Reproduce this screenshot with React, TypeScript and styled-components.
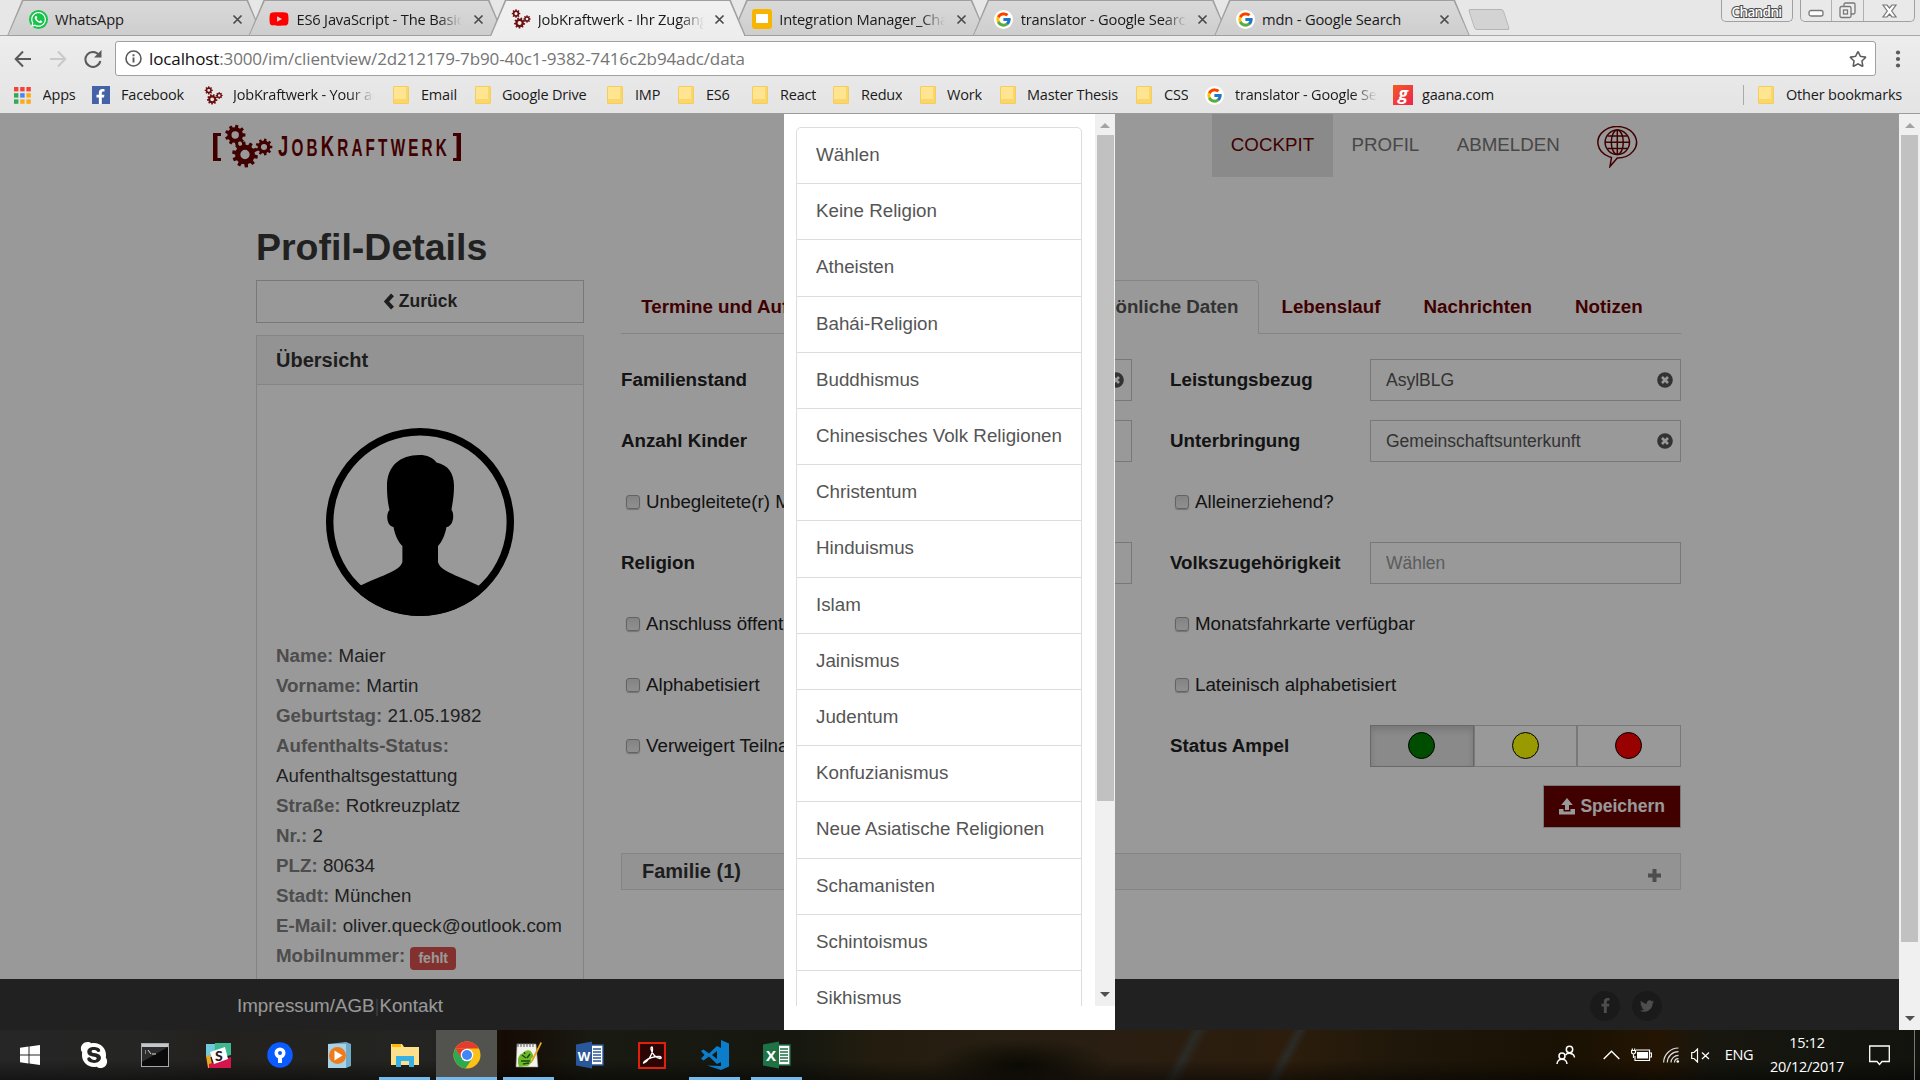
import React from 'react';
import styled, { createGlobalStyle, css } from 'styled-components';
import { FcGoogle } from 'react-icons/fc';
import { FaWhatsapp, FaFacebookF, FaTwitter, FaSkype, FaRegStar, FaYoutube } from 'react-icons/fa';

const UI = '"Open Sans", "Noto Sans", sans-serif';
const PAGE = '"Liberation Sans", Arial, sans-serif';
const MAROON = '#6c0000';

const Global = createGlobalStyle`
  * { box-sizing: border-box; }
  html, body { margin: 0; padding: 0; overflow: hidden; }
  body { width: 1920px; height: 1080px; background: #999; }
  svg { display: block; flex: none; }
`;

const Screen = styled.div`
  width: 1920px;
  height: 1080px;
  display: flex;
  flex-direction: column;
  overflow: hidden;
`;

/* ---------- browser chrome ---------- */

const Chrome = styled.header`
  height: 114px;
  flex: none;
  display: flex;
  flex-direction: column;
  background: linear-gradient(#e7e7e7 0, #e7e7e7 35px, #ededed 36px, #e4e4e4 113px);
  border-bottom: 1.5px solid #9b9b9b;
  font-family: ${UI};
  color: #1a1a1a;
`;

const TabStrip = styled.div`
  height: 36px;
  display: flex;
  align-items: flex-start;
  padding-left: 7px;
  box-shadow: inset 0 -1px 0 #a8a8a8;
`;

const SLANT = 'polygon(15px 0, calc(100% - 15px) 0, 100% 100%, 0 100%)';

const Tab = styled.div<{ $active?: boolean }>`
  position: relative;
  z-index: ${p => (p.$active ? 2 : 1)};
  width: 256px;
  height: 36px;
  margin-right: -14.6px;
  padding: 2px 16px 0 21px;
  display: flex;
  align-items: center;
  clip-path: ${SLANT};
  background: #9f9f9f;
  &::before {
    content: '';
    position: absolute;
    inset: 1px 1.4px ${p => (p.$active ? 0 : 1)}px 1.4px;
    clip-path: ${SLANT};
    background: ${p => (p.$active ? 'linear-gradient(#f1f1f1,#ededed)' : 'linear-gradient(#d9d9d9,#cecece)')};
  }
  > * { position: relative; }
`;

const TabIcon = styled.span`
  width: 20px;
  display: flex;
  justify-content: center;
  margin-right: 7px;
`;

const fade = css`
  mask-image: linear-gradient(90deg, #000 calc(100% - 24px), transparent);
`;

const TabTitle = styled.span<{ $fade?: boolean }>`
  flex: 1;
  overflow: hidden;
  white-space: nowrap;
  font-size: 14.7px;
  letter-spacing: -0.18px;
  line-height: 22px;
  ${p => p.$fade && fade}
`;

const TabClose = styled.span`
  width: 20px;
  margin-left: 6px;
  display: flex;
  justify-content: center;
`;

const NewTab = styled.div`
  width: 42px;
  height: 21px;
  margin: 9px 0 0 13px;
  background: #d3d3d3;
  border: 1px solid #b4b4b4;
  border-radius: 3px;
  transform: skewX(18deg) scaleX(0.84);
`;

const WindowControls = styled.div`
  margin-left: auto;
  display: flex;
  gap: 7.5px;
  padding-right: 5px;
`;

const ControlBox = styled.div`
  height: 22px;
  display: flex;
  border: 1.5px solid #a0a0a0;
  border-top: 0;
  border-radius: 0 0 5px 5px;
  background: #e9e9e9;
`;

const UserName = styled.span`
  width: 70px;
  text-align: center;
  font-size: 13.5px;
  font-weight: 600;
  line-height: 24px;
  letter-spacing: -0.6px;
  color: #fff;
  -webkit-text-stroke: 2px #4a4a4a;
  paint-order: stroke fill;
`;

const ControlCell = styled.span<{ $w: number }>`
  width: ${p => p.$w}px;
  display: flex;
  align-items: center;
  justify-content: center;
  & + & { border-left: 1px solid #b0b0b0; }
`;

const AddressRow = styled.div`
  height: 45px;
  display: flex;
  align-items: center;
  padding: 0 15px 0 13px;
`;

const NavButton = styled.span`
  width: 20px;
  margin-right: 15px;
  display: flex;
  justify-content: center;
`;

const UrlBox = styled.div`
  flex: 1;
  height: 35px;
  margin: 0 15px 0 -3px;
  padding: 0 8px 0 9px;
  display: flex;
  align-items: center;
  background: #fff;
  border: 1px solid #a0a0a0;
  border-radius: 3px;
`;

const Url = styled.span`
  flex: 1;
  margin-left: 7px;
  font-size: 17px;
  letter-spacing: -0.115px;
  white-space: nowrap;
  color: #757575;
  b { font-weight: 400; color: #111; }
`;

const BookmarkRow = styled.div`
  height: 28px;
  display: flex;
  align-items: center;
  padding-left: 14px;
`;

const Bookmark = styled.div<{ $w?: number; $gap: number }>`
  ${p => p.$w && `width: ${p.$w}px;`}
  flex: none;
  display: flex;
  align-items: center;
  gap: ${p => p.$gap}px;
  font-size: 14.5px;
  letter-spacing: -0.2px;
  white-space: nowrap;
`;

const BookmarkText = styled.span<{ $w?: number }>`
  overflow: hidden;
  line-height: 24px;
  ${p => p.$w && css`width: ${p.$w}px; ${fade}`}
`;

const BookmarkDivider = styled.span`
  width: 1px;
  height: 20px;
  margin: 0 14px 0 auto;
  background: #aaa;
`;

const Folder = styled.span`
  width: 16px;
  height: 18px;
  background: #ffe591;
  border: 1px solid #f3cd62;
  border-radius: 1px;
  box-shadow: inset -3px -5px 0 -1px #fbd768;
`;

const Gaana = styled.span`
  width: 20px;
  height: 20px;
  background: linear-gradient(135deg, #f15a22, #ee2350);
  color: #fff;
  font: italic 700 18px/17px "Open Sans", sans-serif;
  text-align: center;
`;

const FacebookMark = styled.span`
  width: 18px;
  height: 18px;
  background: #4561a8;
  color: #fff;
  display: flex;
  align-items: flex-end;
  justify-content: flex-end;
  padding-right: 2px;
`;

const SlidesMark = styled.span`
  width: 20px;
  height: 20px;
  border-radius: 3px;
  background: #fff;
  border: solid #f8b500;
  border-width: 5px 4px 6px;
`;

const Round = styled.span<{ $bg?: string }>`
  width: 19px;
  height: 19px;
  border-radius: 50%;
  background: ${p => p.$bg ?? '#fff'};
  display: flex;
  align-items: center;
  justify-content: center;
`;

/* ---------- page ---------- */

const Viewport = styled.div`
  position: relative;
  flex: 1;
  min-height: 0;
  display: flex;
`;

const Page = styled.div`
  position: relative;
  width: 1899px;
  display: flex;
  flex-direction: column;
  background: #fff;
  font-family: ${PAGE};
  font-size: 18.75px;
  color: #222;
`;

const Main = styled.main`
  flex: 1;
  min-height: 0;
  overflow: hidden;
`;

const SiteHeader = styled.div`
  height: 63px;
  display: flex;
  justify-content: space-between;
  padding: 0 260px 0 213px;
`;

const Nav = styled.nav`
  display: flex;
`;

const NavItem = styled.a<{ $active?: boolean }>`
  padding: 0 18.7px;
  height: 63px;
  line-height: 61px;
  color: ${p => (p.$active ? MAROON : '#777')};
  background: ${p => (p.$active ? '#e7e7e7' : 'transparent')};
`;

const LanguageIcon = styled.span`
  margin: 12px 0 0 18.5px;
`;

const LogoWrap = styled.div`
  padding-top: 9px;
`;

const Content = styled.div`
  padding: 49px 0 0 256px;
  width: 1681px;
`;

const Title = styled.h1`
  margin: 0 0 11px;
  font-size: 37.5px;
  line-height: 43px;
  font-weight: 700;
  color: #373737;
`;

const Columns = styled.div`
  display: grid;
  grid-template-columns: 328px 1060px;
  column-gap: 37px;
`;

const Button = styled.button<{ $primary?: boolean }>`
  height: 43px;
  padding: 0 15px 0 ${p => (p.$primary ? 14 : 15)}px;
  display: flex;
  align-items: center;
  justify-content: center;
  gap: 4px;
  font: 700 17.5px ${PAGE};
  border: 1px solid #c8c8c8;
  color: ${p => (p.$primary ? '#fff' : '#333')};
  background: ${p => (p.$primary ? MAROON : '#fff')};
`;

const BackButton = styled(Button)`
  width: 328px;
  margin-bottom: 12px;
`;

const Panel = styled.section`
  border: 1px solid #ddd;
  height: 900px;
`;

const PanelHead = styled.div`
  height: 49px;
  padding: 0 19px;
  line-height: 48px;
  font-size: 20px;
  font-weight: 700;
  color: #333;
  background: #f5f5f5;
  border-bottom: 1px solid #ddd;
`;

const PanelBody = styled.div`
  padding: 43px 19px 0;
`;

const AvatarWrap = styled.div`
  display: flex;
  justify-content: center;
  margin-bottom: 25px;
`;

const Detail = styled.div`
  line-height: 30px;
  white-space: nowrap;
  color: #373737;
  b { color: #808080; }
`;

const Badge = styled.span`
  display: inline-block;
  height: 23px;
  padding: 0 8px;
  line-height: 23px;
  vertical-align: -1px;
  margin: -4px 0;
  font-size: 14.06px;
  font-weight: 700;
  color: #fff;
  background: #d9534f;
  border-radius: 4px;
`;

const PageTabs = styled.div`
  height: 54px;
  display: flex;
  align-items: stretch;
  border-bottom: 1px solid #ddd;
  font-weight: 700;
`;

const PageTab = styled.a<{ $active?: boolean }>`
  margin: 0 2.5px -1px 0;
  padding: 0 19.3px;
  line-height: 52px;
  border: 1px solid transparent;
  white-space: nowrap;
  color: ${MAROON};
  ${p =>
    p.$active &&
    css`
      color: #555;
      background: #fff;
      border-color: #ddd #ddd #fff;
      border-radius: 5px 5px 0 0;
    `}
`;

const TabGroup = styled.div<{ $w: number }>`
  display: flex;
  width: ${p => p.$w}px;
  justify-content: flex-end;
`;

const Form = styled.div`
  margin-top: 15.5px;
  display: grid;
  grid-template-columns: 201px 310px 38px 200px 311px;
  grid-auto-rows: 61px;
  align-items: center;
  color: #222;
`;

const Label = styled.label<{ $right?: boolean }>`
  grid-column: ${p => (p.$right ? 4 : 1)};
  font-weight: 700;
`;

const Input = styled.div<{ $right?: boolean; $empty?: boolean }>`
  grid-column: ${p => (p.$right ? 5 : 2)};
  height: 42px;
  padding: 0 7px 0 15px;
  display: flex;
  align-items: center;
  justify-content: space-between;
  border: 1px solid #c8c8c8;
  font-size: 17.5px;
  color: ${p => (p.$empty ? '#999' : '#555')};
`;

const CheckLabel = styled.label<{ $right?: boolean }>`
  grid-column: ${p => (p.$right ? '4 / span 2' : '1 / span 2')};
  display: flex;
  align-items: center;
  gap: 6px;
  padding-left: 5px;
  white-space: nowrap;
`;

const Check = styled.span`
  width: 14px;
  height: 14px;
  border: 1px solid #a6a6a6;
  border-radius: 3px;
  background: linear-gradient(#dcdcdc, #efefef);
  box-shadow: 0 1px 1px rgba(0, 0, 0, 0.25);
`;

const Lights = styled.div`
  grid-column: 5;
  height: 42px;
  display: grid;
  grid-template-columns: 104px 103px 104px;
`;

const Light = styled.span<{ $c: string; $on?: boolean }>`
  display: flex;
  align-items: center;
  justify-content: center;
  padding: 0 1px 1px 0;
  border: 1px solid ${p => (p.$on ? '#adadad' : '#c8c8c8')};
  background: ${p => (p.$on ? '#e6e6e6' : '#fff')};
  box-shadow: ${p => (p.$on ? 'inset 0 4px 6px rgba(0,0,0,0.14)' : 'none')};
  &::before {
    content: '';
    width: 25px;
    height: 25px;
    border: 1px solid #000;
    border-radius: 50%;
    background: ${p => p.$c};
  }
`;

const Actions = styled.div`
  display: flex;
  justify-content: flex-end;
  margin: 8.5px 0 25px;
`;

const Accordion = styled.div`
  height: 37px;
  padding: 0 19px 1px 20px;
  display: flex;
  align-items: center;
  justify-content: space-between;
  border: 1px solid #ddd;
  background: #f5f5f5;
  font-size: 20px;
  font-weight: 700;
  color: #333;
  svg { margin-top: 9px; }
`;

const Footer = styled.footer`
  flex: none;
  height: 51px;
  padding: 2px 237px 0 237px;
  display: flex;
  align-items: center;
  justify-content: space-between;
  background: #383838;
  color: #666;
  a { color: #fff; }
`;

const Social = styled.div`
  display: flex;
  gap: 12px;
`;

const SocialButton = styled.span`
  width: 30px;
  height: 30px;
  border-radius: 50%;
  background: #2c2c2c;
  color: #808080;
  display: flex;
  align-items: center;
  justify-content: center;
`;

const Backdrop = styled.div`
  position: absolute;
  inset: 0;
  background: rgba(0, 0, 0, 0.4);
`;

const Modal = styled.div`
  position: absolute;
  top: 0;
  bottom: 0;
  left: 784px;
  width: 331px;
  padding-bottom: 24px;
  display: flex;
  background: #fff;
`;

const ListScroll = styled.div`
  flex: 1;
  overflow: hidden;
  padding: 13px 13px 0 12px;
`;

const List = styled.ul`
  margin: 0;
  padding: 0;
  list-style: none;
  border: 1px solid #ddd;
  border-radius: 5px;
`;

const ListItem = styled.li`
  height: 56.2px;
  padding: 0 19px;
  line-height: 54px;
  color: #555;
  white-space: nowrap;
  &:first-child { height: 55.3px; }
  & + & { border-top: 1px solid #ddd; }
`;

const ScrollTrack = styled.div<{ $w: number }>`
  width: ${p => p.$w}px;
  flex: none;
  background: #f0f0f0;
  display: flex;
  flex-direction: column;
  align-items: center;
`;

const ScrollThumb = styled.div<{ $h: number }>`
  width: 17px;
  height: ${p => p.$h}px;
  background: #c1c1c1;
`;

const ScrollArrow = styled.div<{ $down?: boolean }>`
  height: ${p => (p.$down ? 23 : 21)}px;
  display: flex;
  align-items: center;
  margin-top: ${p => (p.$down ? 'auto' : 0)};
  &::before {
    content: '';
    border: 5px solid transparent;
    ${p =>
      p.$down
        ? 'border-top-color: #505050; border-bottom: 0;'
        : 'border-bottom-color: #a3a3a3; border-top: 0; margin-top: 2px;'}
  }
`;

/* ---------- taskbar ---------- */

const Taskbar = styled.div`
  height: 50px;
  flex: none;
  display: flex;
  background:
    linear-gradient(rgba(0, 0, 0, 0) 60%, rgba(0, 0, 0, 0.45)),
    radial-gradient(ellipse 90px 26px at 1020px 34px, rgba(8, 8, 3, 0.9), transparent),
    linear-gradient(118deg, transparent 1050px, #2b2b27 1058px, transparent 1068px),
    linear-gradient(118deg, transparent 1140px, #2b2b27 1148px, transparent 1156px),
    linear-gradient(90deg, #262626 0, #252524 140px, #22211d 220px, #242422 430px, #150b04 505px, #191a12 590px,
      #161810 800px, #241d0f 880px, #271f12 1000px, #2a1e11 1160px, #2c1d0c 1290px, #1f170a 1400px, #191103 1560px,
      #241503 1660px, #171710 1710px, #12130d 1920px);
  color: #fff;
  font-family: ${UI};
`;

const TaskItem = styled.div<{ $w: number; $open?: boolean; $active?: boolean }>`
  width: ${p => p.$w}px;
  display: flex;
  align-items: center;
  justify-content: center;
  ${p => p.$active && 'background: #52524e;'}
  ${p => p.$open && 'border-bottom: 3px solid #76b9ed; padding-top: 3px;'}
`;

const TaskGap = styled.span<{ $w: number }>`
  width: ${p => p.$w}px;
`;

const Tray = styled.div`
  margin-left: auto;
  display: flex;
  align-items: center;
  padding-right: 5px;
`;

const TrayCell = styled.span<{ $w: number }>`
  width: ${p => p.$w}px;
  display: flex;
  justify-content: center;
`;

const TrayText = styled.span<{ $w: number }>`
  width: ${p => p.$w}px;
  text-align: center;
  font-size: 14.5px;
  line-height: 24px;
  letter-spacing: -0.3px;
  white-space: nowrap;
`;

const ShowDesktop = styled.span`
  width: 1px;
  height: 50px;
  background: #777;
`;

/* ---------- drawings ---------- */

function gear(cx: number, cy: number, r: number, n: number, phase = 0) {
  const pts: string[] = [];
  const inner = r * 0.76;
  const step = (Math.PI * 2) / n;
  for (let i = 0; i < n; i++) {
    const a = i * step + phase;
    for (const [k, rad] of [[-0.3, inner], [-0.2, r], [0.2, r], [0.3, inner]] as const) {
      pts.push(`${(cx + Math.cos(a + k * step) * rad).toFixed(2)},${(cy + Math.sin(a + k * step) * rad).toFixed(2)}`);
    }
  }
  const h = r * 0.36;
  return `M${pts.join('L')}Z M${cx - h},${cy}a${h},${h} 0 1,0 ${h * 2},0a${h},${h} 0 1,0 ${-h * 2},0Z`;
}

const Gears = ({ size = 20, color = '#6b1010' }) => (
  <svg width={size} height={size} viewBox="0 0 20 20" fill={color} fillRule="evenodd">
    <path d={gear(5, 4.6, 4.3, 8)} />
    <path d={gear(8.6, 14, 5.6, 9, 0.2)} />
    <path d={gear(16, 10, 3.7, 8)} />
  </svg>
);

const Logo = () => (
  <svg width="250" height="52" viewBox="213 123 250 52" fill={MAROON}>
    <path d="M213 133h8v3h-3.500v22H221v3h-8z M461 133h-8v3h3.500v22H453v3h8z" />
    <g fillRule="evenodd">
      <path d={gear(235.2, 135, 10.3, 9)} />
      <path d={gear(245, 154.5, 13, 10, 0.2)} />
      <path d={gear(264, 147, 8.4, 9)} />
    </g>
    <text x="278" y="156" fontFamily='"Liberation Sans", Arial, sans-serif' fontWeight="700" fontSize="24"
      letterSpacing="5" textLength="172" lengthAdjust="spacingAndGlyphs">
      <tspan fontSize="29">J</tspan>OB<tspan fontSize="29">K</tspan>RAFTWERK
    </text>
  </svg>
);

const Cross = () => (
  <svg width="11" height="11" viewBox="0 0 11 11" stroke="#4a4a4a" strokeWidth="1.700">
    <path d="M1.500 1.500l8 8M9.500 1.500l-8 8" />
  </svg>
);

const Arrow = ({ flip = false, color = '#5a5a5a' }) => (
  <svg width="18" height="18" viewBox="0 0 18 18" fill="none" stroke={color} strokeWidth="2"
    transform={flip ? 'scale(-1,1)' : undefined}>
    <path d="M17 9H2M9 1.500L1.700 9 9 16.500" />
  </svg>
);

const Globe = () => (
  <svg width="42" height="42" viewBox="0 0 42 42" fill="none" stroke={MAROON} strokeWidth="1.500">
    <path d="M12 30.600A19.300 15.800 0 1 1 20.300 32.100L13 40.500 14.500 31.500 12 30.600" />
    <circle cx="20.300" cy="16.300" r="12.200" />
    <ellipse cx="20.300" cy="16.300" rx="6" ry="12.200" />
    <path d="M20.300 4v24.500M8.100 16.300h24.400M10.500 10h19.600M10.500 22.600h19.600" />
  </svg>
);

const Avatar = () => (
  <svg width="188" height="188" viewBox="0 0 188 188">
    <clipPath id="avatarDisc"><circle cx="94" cy="94" r="93.900" /></clipPath>
    <circle cx="94" cy="94" r="90.300" fill="none" stroke="#000" strokeWidth="7.400" />
    <path clipPath="url(#avatarDisc)" d="M93.500 27C101 27 107 29.500 110.500 34.500C122 37 128 45 128 58C128 68 126.500 75 125.500 82C128.500 85 128 98 120.500 99C119 107 116 114 112 118V134C114 143 128 146 152.500 157.500V188H34.600V157.500C59 146 74 143 76.400 134V118C72 114 69 107 67.500 99C60 98 60 85 63.500 82C62 75 61 68 61 58C61 38 74 27 93.500 27Z" />
  </svg>
);

const ChevronLeft = () => (
  <svg width="12" height="17" viewBox="0 0 12 17" fill="none" stroke="#333" strokeWidth="4">
    <path d="M9.500 1.800L3.500 8.500l6 6.700" />
  </svg>
);

const Clear = () => (
  <svg width="16" height="16" viewBox="0 0 16 16">
    <circle cx="8" cy="8" r="7.800" fill="#555" />
    <path d="M5 5l6 6M11 5l-6 6" stroke="#fff" strokeWidth="2.600" />
  </svg>
);

const Upload = () => (
  <svg width="18" height="18" viewBox="0 0 18 18" fill="#fff">
    <path d="M9 0l5.800 7H11v5H7V7H3.200zM1 11h4.500v2.500h7V11H17v5.500H1z" />
  </svg>
);

const Plus = () => (
  <svg width="13" height="13" viewBox="0 0 13 13" fill="#808080">
    <path d="M4.500 0h4v4.500H13v4H8.500V13h-4V8.500H0v-4h4.500z" />
  </svg>
);

const AppsGrid = () => {
  const c = ['#f44336', '#f44336', '#f44336', '#34a853', '#4285f4', '#fbab17', '#34a853', '#fbab17', '#fbab17'];
  return (
    <svg width="17" height="17" viewBox="0 0 17 17">
      {c.map((f, i) => (
        <rect key={i} x={(i % 3) * 6.2} y={Math.floor(i / 3) * 6.2} width="4.400" height="4.400" fill={f} />
      ))}
    </svg>
  );
};

const WindowsLogo = () => (
  <svg width="20" height="20" viewBox="0 0 20 20" fill="#fff">
    <path d="M0 2.800l8.500-1.200v8H0zM9.500 1.500L20 0v9.600H9.500zM0 10.500h8.500v8L0 17.300zM9.500 10.500H20V20L9.500 18.500z" />
  </svg>
);

const Terminal = () => (
  <svg width="28" height="24" viewBox="0 0 28 24">
    <rect x=".5" y=".5" width="27" height="23" fill="#0a0a0a" stroke="#a5a9ad" />
    <rect x="1" y="1" width="26" height="3" fill="#c4c8cc" />
    <path d="M1 4h26L1 19z" fill="#444" opacity=".6" />
    <path d="M4 8h1M4 10h1M7 7l3 4M11 11h4" stroke="#ddd" />
  </svg>
);

const Slack = () => (
  <svg width="25" height="25" viewBox="0 0 25 25">
    <path d="M0 1h12l-3 13H0z" fill="#6ecadc" />
    <path d="M9 0h16v12L8 16z" fill="#3eb891" />
    <path d="M0 13l4-1 3 13H2z" fill="#e9a820" />
    <path d="M3 21l22-7v11H3z" fill="#d5164c" />
    <path d="M4 9l15-5 3 12-14 5z" fill="#fff" />
    <text x="12.800" y="18" textAnchor="middle" fontFamily="Lato, sans-serif" fontWeight="900" fontSize="14" fill="#222">S</text>
  </svg>
);

const SourceTree = () => (
  <svg width="26" height="26" viewBox="0 0 26 26">
    <circle cx="13" cy="13" r="12.800" fill="#0a5cff" />
    <circle cx="13" cy="11" r="5.500" fill="#fff" />
    <path d="M11 15h4v6h-4z" fill="#fff" />
    <circle cx="13" cy="11" r="2" fill="#0a5cff" />
  </svg>
);

const MediaPlayer = () => (
  <svg width="26" height="26" viewBox="0 0 26 26">
    <path d="M1 2l18-2 5 2v22l-5 2H1z" fill="#6faac8" />
    <path d="M1 2h18v24H1z" fill="#a8d3e6" />
    <circle cx="10.500" cy="13.500" r="8.500" fill="#ee7b1c" />
    <path d="M7.500 8.500l8 5-8 5z" fill="#fff" />
  </svg>
);

const Explorer = () => (
  <svg width="28" height="25" viewBox="0 0 28 25">
    <path d="M0 1h11l2 3h15v18H0z" fill="#ffe08a" />
    <path d="M1 1h9v3H1z" fill="#ffb900" />
    <path d="M5 24V13h18v11h-5v-6h-8v6z" fill="#35b1e8" />
  </svg>
);

const ChromeLogo = () => (
  <svg width="28" height="28" viewBox="0 0 28 28">
    <circle cx="14" cy="14" r="13.500" fill="#fbc116" />
    <path d="M2.300 7.300A13.500 13.500 0 0 1 25.800 7.500H14z" fill="#e33b2e" />
    <path d="M2.300 7.300A13.500 13.500 0 0 0 12.500 27.400L19.500 17 14 14 8 16z" fill="#2da94f" />
    <path d="M2.300 7.300L8.500 17.300 14 7.500H8z" fill="#e33b2e" />
    <circle cx="14" cy="14" r="6.300" fill="#fff" />
    <circle cx="14" cy="14" r="5" fill="#4285f4" />
  </svg>
);

const Notepad = () => (
  <svg width="28" height="28" viewBox="0 0 28 28">
    <path d="M2 3h19l2 23H1z" fill="#f4f4ee" stroke="#888" strokeWidth=".6" />
    <path d="M3 2v4M6 2v4M9 2v4M12 2v4M15 2v4M18 2v4" stroke="#555" />
    <path d="M3 18c1-4 3-6 6-6 1-3 6-4 8 0 2 3 1 5-1 6l1 3-4 4-9 1-1-4z" fill="#6fb92a" />
    <path d="M7 14l4 3M15 13l-3 4M6 20h9M8 23l6-1M9 11l1 2" stroke="#1c4a0c" strokeWidth="1.500" />
    <path d="M25.500 1L27 2 18 20l-2 2 .3-3z" fill="#e6a41c" />
  </svg>
);

const Office = ({ letter, color }: { letter: string; color: string }) => (
  <svg width="28" height="28" viewBox="0 0 28 28">
    <path d="M15 4h12v20H15z" fill="#fff" stroke={color} strokeWidth="1.400" />
    <path d="M17 8h8M17 11h8M17 14h8M17 17h8M17 20h8" stroke={color} strokeWidth="1.400" />
    <path d="M0 3.500L16 .5v27L0 24.500z" fill={color} />
    <text x="8" y="19.500" textAnchor="middle" fontFamily="Open Sans, sans-serif" fontWeight="700" fontSize={letter === 'W' ? 13 : 15} fill="#fff">{letter}</text>
  </svg>
);

const Acrobat = () => (
  <svg width="28" height="27" viewBox="0 0 28 27">
    <rect x="1" y="1" width="26" height="25" fill="#2a0503" stroke="#e0200c" strokeWidth="2" />
    <path d="M6 21c3-1 9-8 8.500-15-.2-2-2-1-1.500 1 1 5 5 9 9 9.500 2 0 1.500-2-1-2-5 0-10 1.500-14 4.500-1.500 1.500-2 2.500-1 2z" fill="none" stroke="#fff" strokeWidth="1.300" />
  </svg>
);

const VsCode = () => (
  <svg width="30" height="30" viewBox="0 0 30 30" fill="#0b7dcb">
    <path fillRule="evenodd" d="M21 0l8 3.500v23L21 30 7 25.500l14 .500zM1 11l2.500-1.500L9 13.500 17 6l4 2v14l-4 2-8-7.500-5.500 4L1 18.500 4.500 15zM17 11l-5 4 5 4z" />
  </svg>
);

const People = () => (
  <svg width="20" height="20" viewBox="0 0 20 20" fill="none" stroke="#fff" strokeWidth="1.500">
    <circle cx="13.500" cy="4.500" r="3.200" /><path d="M9.500 10c2-2.500 8.500-2.500 9 2.500" />
    <circle cx="6" cy="11" r="3" /><path d="M1 19c.5-6.500 9.500-6.500 10 0" />
  </svg>
);
const ChevronUp = () => (
  <svg width="17" height="10" viewBox="0 0 17 10" fill="none" stroke="#fff" strokeWidth="1.400"><path d="M.7 9L8.500 1.300 16.300 9" /></svg>
);
const Battery = () => (
  <svg width="21" height="14" viewBox="0 0 21 14" fill="none" stroke="#fff" strokeWidth="1.200">
    <path d="M5 2h13.500v10.500H4V8" /><path d="M6 4h11v6.500H6z" fill="#fff" stroke="none" />
    <path d="M19 5h1.500v4H19M.5 2.500h4v2.300l-2 1.500-2-1.500zM1.300.500v2M3.700.500v2M2.500 6v4" />
  </svg>
);
const Wifi = () => (
  <svg width="17" height="16" viewBox="0 0 17 16" fill="none" stroke="#ddd" strokeWidth="1.200">
    <path d="M.6 15.500A15 15 0 0 1 15.500 1M4.300 15.500A11 11 0 0 1 15.500 4.700M8 15.500A7.500 7.500 0 0 1 15.500 8.300M11.500 15.500A4 4 0 0 1 15.500 11.700" />
    <circle cx="14.800" cy="14.500" r="1.300" fill="#fff" stroke="none" />
  </svg>
);
const Muted = () => (
  <svg width="19" height="15" viewBox="0 0 19 15" fill="none" stroke="#fff" strokeWidth="1.200">
    <path d="M.7 4.500H3L6.500 1v13L3 10.500H.7zM11 4.500l7 6.500M18 4.500l-7 6.500" />
  </svg>
);
const ActionCenter = () => (
  <svg width="21" height="21" viewBox="0 0 21 21" fill="none" stroke="#fff" strokeWidth="1.300">
    <path d="M.7 1h19.600v15.500H13l-2.500 3-2.500-3H.7z" />
  </svg>
);

/* ---------- data ---------- */

const tabs: { title: string; icon: React.ReactNode; fade?: boolean; active?: boolean }[] = [
  { title: 'WhatsApp', icon: <Round $bg="#18c34b"><FaWhatsapp size={17} color="#fff" /></Round> },
  { title: 'ES6 JavaScript - The Basics', icon: <FaYoutube size={20} color="#f00" />, fade: true },
  { title: 'JobKraftwerk - Ihr Zugang', icon: <Gears />, fade: true, active: true },
  { title: 'Integration Manager_Chandni', icon: <SlidesMark />, fade: true },
  { title: 'translator - Google Search', icon: <Round><FcGoogle size={17} /></Round>, fade: true },
  { title: 'mdn - Google Search', icon: <Round><FcGoogle size={17} /></Round> },
];

const bookmarks: { t: string; icon: React.ReactNode; w: number; gap: number; clip?: number }[] = [
  { t: 'Apps', icon: <AppsGrid />, w: 78, gap: 11.5 },
  { t: 'Facebook', icon: <FacebookMark><FaFacebookF size={15} /></FacebookMark>, w: 112, gap: 11 },
  { t: 'JobKraftwerk - Your access', icon: <Gears size={19} />, w: 189, gap: 10, clip: 141 },
  { t: 'Email', icon: <Folder />, w: 82, gap: 12 },
  { t: 'Google Drive', icon: <Folder />, w: 132, gap: 11 },
  { t: 'IMP', icon: <Folder />, w: 71, gap: 12 },
  { t: 'ES6', icon: <Folder />, w: 74, gap: 12 },
  { t: 'React', icon: <Folder />, w: 81, gap: 12 },
  { t: 'Redux', icon: <Folder />, w: 87, gap: 12 },
  { t: 'Work', icon: <Folder />, w: 80, gap: 11 },
  { t: 'Master Thesis', icon: <Folder />, w: 136, gap: 11 },
  { t: 'CSS', icon: <Folder />, w: 69, gap: 12 },
  { t: 'translator - Google Search', icon: <Round><FcGoogle size={17} /></Round>, w: 188, gap: 11, clip: 142 },
  { t: 'gaana.com', icon: <Gaana>g</Gaana>, w: 140, gap: 9 },
];

const religions = [
  'Wählen', 'Keine Religion', 'Atheisten', 'Bahái-Religion', 'Buddhismus', 'Chinesisches Volk Religionen',
  'Christentum', 'Hinduismus', 'Islam', 'Jainismus', 'Judentum', 'Konfuzianismus', 'Neue Asiatische Religionen',
  'Schamanisten', 'Schintoismus', 'Sikhismus',
];

const details: [string, string][] = [
  ['Name:', 'Maier'], ['Vorname:', 'Martin'], ['Geburtstag:', '21.05.1982'], ['Aufenthalts-Status:', ''],
  ['', 'Aufenthaltsgestattung'], ['Straße:', 'Rotkreuzplatz'], ['Nr.:', '2'], ['PLZ:', '80634'],
  ['Stadt:', 'München'], ['E-Mail:', 'oliver.queck@outlook.com'],
];

/* ---------- sections ---------- */

const BrowserChrome = () => (
  <Chrome>
    <TabStrip>
      {tabs.map(t => (
        <Tab key={t.title} $active={t.active}>
          <TabIcon>{t.icon}</TabIcon>
          <TabTitle $fade={t.fade}>{t.title}</TabTitle>
          <TabClose><Cross /></TabClose>
        </Tab>
      ))}
      <NewTab />
      <WindowControls>
        <ControlBox><UserName>Chandni</UserName></ControlBox>
        <ControlBox>
          <ControlCell $w={30}>
            <svg width="16" height="8" viewBox="0 0 16 8" transform="translate(0,2)"><rect x="1" y="1.500" width="14" height="5.500" rx="2" fill="#fff" stroke="#777" strokeWidth="1.300" /></svg>
          </ControlCell>
          <ControlCell $w={32}>
            <svg width="17" height="17" viewBox="0 0 17 17" fill="#eee" stroke="#777" strokeWidth="1.300">
              <rect x="5" y="1" width="11" height="11" rx="1.500" /><rect x="1" y="4.500" width="11" height="11" rx="1.500" /><rect x="4.500" y="8" width="4" height="4" />
            </svg>
          </ControlCell>
          <ControlCell $w={51}>
            <svg width="15" height="14" viewBox="0 0 15 14" fill="#fff" stroke="#777" strokeWidth="1.200">
              <path d="M1 1h4l2.500 3L10 1h4L9.700 7 14 13h-4l-2.500-3L5 13H1l4.300-6z" />
            </svg>
          </ControlCell>
        </ControlBox>
      </WindowControls>
    </TabStrip>
    <AddressRow>
      <NavButton><Arrow /></NavButton>
      <NavButton><Arrow flip color="#c9c9c9" /></NavButton>
      <NavButton>
        <svg width="18" height="18" viewBox="0 0 18 18" fill="none" stroke="#5a5a5a" strokeWidth="2">
          <path d="M15 5A7.500 7.500 0 1 0 16.300 11" /><path d="M17.500 0v7.500H10z" fill="#5a5a5a" stroke="none" />
        </svg>
      </NavButton>
      <UrlBox>
        <svg width="17" height="17" viewBox="0 0 17 17" fill="none" stroke="#5a5a5a" strokeWidth="1.600">
          <circle cx="8.500" cy="8.500" r="7.500" /><path d="M8.500 7.500v5M8.500 4.300v2" strokeWidth="1.900" />
        </svg>
        <Url><b>localhost</b>:3000/im/clientview/2d212179-7b90-40c1-9382-7416c2b94adc/data</Url>
        <FaRegStar size={18} color="#5a5a5a" />
      </UrlBox>
      <svg width="14" height="18" viewBox="0 0 14 18" fill="#5a5a5a">
        <circle cx="7" cy="2.500" r="2.100" /><circle cx="7" cy="9" r="2.100" /><circle cx="7" cy="15.500" r="2.100" />
      </svg>
    </AddressRow>
    <BookmarkRow>
      {bookmarks.map(b => (
        <Bookmark key={b.t} $w={b.w} $gap={b.gap}>
          {b.icon}
          <BookmarkText $w={b.clip}>{b.t}</BookmarkText>
        </Bookmark>
      ))}
      <BookmarkDivider />
      <Bookmark $w={162} $gap={12}><Folder /><BookmarkText>Other bookmarks</BookmarkText></Bookmark>
    </BookmarkRow>
  </Chrome>
);

const Profile = () => (
  <Content>
    <Title>Profil-Details</Title>
    <Columns>
      <div>
        <BackButton><ChevronLeft />Zurück</BackButton>
        <Panel>
          <PanelHead>Übersicht</PanelHead>
          <PanelBody>
            <AvatarWrap><Avatar /></AvatarWrap>
            {details.map(([k, v]) => (
              <Detail key={k + v}>{k && <b>{k}</b>}{k && ' '}{v}</Detail>
            ))}
            <Detail><b>Mobilnummer:</b> <Badge>fehlt</Badge></Detail>
          </PanelBody>
        </Panel>
      </div>
      <div>
        <PageTabs>
          <PageTab>Termine und Aufgaben</PageTab>
          <TabGroup $w={395}><PageTab $active>Persönliche Daten</PageTab></TabGroup>
          <PageTab>Lebenslauf</PageTab>
          <PageTab>Nachrichten</PageTab>
          <PageTab>Notizen</PageTab>
        </PageTabs>
        <Form>
          <Label>Familienstand</Label><Input><span /><Clear /></Input>
          <Label $right>Leistungsbezug</Label><Input $right>AsylBLG<Clear /></Input>
          <Label>Anzahl Kinder</Label><Input />
          <Label $right>Unterbringung</Label><Input $right>Gemeinschaftsunterkunft<Clear /></Input>
          <CheckLabel><Check />Unbegleitete(r) M</CheckLabel>
          <CheckLabel $right><Check />Alleinerziehend?</CheckLabel>
          <Label>Religion</Label><Input />
          <Label $right>Volkszugehörigkeit</Label><Input $right $empty>Wählen</Input>
          <CheckLabel><Check />Anschluss öffentl.</CheckLabel>
          <CheckLabel $right><Check />Monatsfahrkarte verfügbar</CheckLabel>
          <CheckLabel><Check />Alphabetisiert</CheckLabel>
          <CheckLabel $right><Check />Lateinisch alphabetisiert</CheckLabel>
          <CheckLabel><Check />Verweigert Teilnahme</CheckLabel>
          <Label $right>Status Ampel</Label>
          <Lights><Light $c="#008000" $on /><Light $c="#ffff00" /><Light $c="#ff0000" /></Lights>
        </Form>
        <Actions><Button $primary><Upload />Speichern</Button></Actions>
        <Accordion>Familie (1)<Plus /></Accordion>
      </div>
    </Columns>
  </Content>
);

const ReligionModal = () => (
  <Modal>
    <ListScroll>
      <List>{religions.map(r => <ListItem key={r}>{r}</ListItem>)}</List>
    </ListScroll>
    <ScrollTrack $w={20}>
      <ScrollArrow /><ScrollThumb $h={666} /><ScrollArrow $down />
    </ScrollTrack>
  </Modal>
);

const WindowsTaskbar = () => (
  <Taskbar>
    <TaskItem $w={60}><WindowsLogo /></TaskItem>
    <TaskItem $w={67}><FaSkype size={30} color="#fff" /></TaskItem>
    <TaskItem $w={56}><Terminal /></TaskItem>
    <TaskItem $w={70}><Slack /></TaskItem>
    <TaskItem $w={54}><SourceTree /></TaskItem>
    <TaskItem $w={66}><MediaPlayer /></TaskItem>
    <TaskGap $w={6} />
    <TaskItem $w={51} $open><Explorer /></TaskItem>
    <TaskGap $w={6} />
    <TaskItem $w={61} $open $active><ChromeLogo /></TaskItem>
    <TaskGap $w={6} />
    <TaskItem $w={51} $open><Notepad /></TaskItem>
    <TaskGap $w={6} />
    <TaskItem $w={60}><Office letter="W" color="#2a579a" /></TaskItem>
    <TaskItem $w={64}><Acrobat /></TaskItem>
    <TaskGap $w={5} />
    <TaskItem $w={51} $open><VsCode /></TaskItem>
    <TaskGap $w={11} />
    <TaskItem $w={51} $open><Office letter="X" color="#1f7244" /></TaskItem>
    <Tray>
      <TrayCell $w={46}><People /></TrayCell>
      <TrayCell $w={44}><ChevronUp /></TrayCell>
      <TrayCell $w={17}><Battery /></TrayCell>
      <TrayCell $w={43}><Wifi /></TrayCell>
      <TrayCell $w={15}><Muted /></TrayCell>
      <TrayText $w={62}>ENG</TrayText>
      <TrayText $w={74}>15:12<br />20/12/2017</TrayText>
      <TrayCell $w={70}><ActionCenter /></TrayCell>
      <ShowDesktop />
    </Tray>
  </Taskbar>
);

export default function App() {
  return (
    <Screen>
      <Global />
      <BrowserChrome />
      <Viewport>
        <Page>
          <Main>
            <SiteHeader>
              <LogoWrap><Logo /></LogoWrap>
              <Nav>
                <NavItem $active>COCKPIT</NavItem>
                <NavItem>PROFIL</NavItem>
                <NavItem>ABMELDEN</NavItem>
                <LanguageIcon><Globe /></LanguageIcon>
              </Nav>
            </SiteHeader>
            <Profile />
          </Main>
          <Footer>
            <span><a>Impressum/AGB</a>|<a>Kontakt</a></span>
            <Social>
              <SocialButton><FaFacebookF size={15} /></SocialButton>
              <SocialButton><FaTwitter size={14} /></SocialButton>
            </Social>
          </Footer>
          <Backdrop />
          <ReligionModal />
        </Page>
        <ScrollTrack $w={21}>
          <ScrollArrow /><ScrollThumb $h={807} /><ScrollArrow $down />
        </ScrollTrack>
      </Viewport>
      <WindowsTaskbar />
    </Screen>
  );
}
